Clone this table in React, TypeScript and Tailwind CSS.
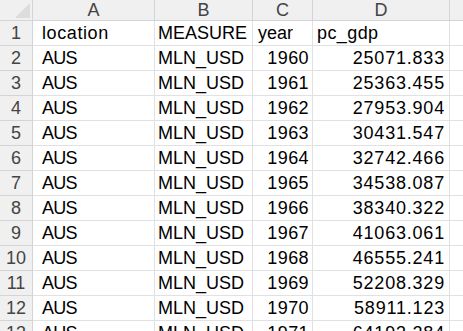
const rows: [string, string, string, string][] = [
  ["location", "MEASURE", "year", "pc_gdp"],
  ["AUS", "MLN_USD", "1960", "25071.833"],
  ["AUS", "MLN_USD", "1961", "25363.455"],
  ["AUS", "MLN_USD", "1962", "27953.904"],
  ["AUS", "MLN_USD", "1963", "30431.547"],
  ["AUS", "MLN_USD", "1964", "32742.466"],
  ["AUS", "MLN_USD", "1965", "34538.087"],
  ["AUS", "MLN_USD", "1966", "38340.322"],
  ["AUS", "MLN_USD", "1967", "41063.061"],
  ["AUS", "MLN_USD", "1968", "46555.241"],
  ["AUS", "MLN_USD", "1969", "52208.329"],
  ["AUS", "MLN_USD", "1970", "58911.123"],
  ["AUS", "MLN_USD", "1971", "64193.284"],
];

const cols = "grid grid-cols-[33px_122px_98px_60px_137px_1fr]";

export default function App() {
  return (
    <div
      className="w-[463px] h-[331px] overflow-hidden bg-white text-[18px] text-black"
      style={{ fontFamily: '"Liberation Sans", Arial, sans-serif' }}
    >
      {/* column headers */}
      <div className={`${cols} h-[21px] bg-[#f0f0f0] text-[#444] border-b border-[#d4d4d4]`}>
        <div className="relative border-r border-[#d4d4d4]">
          <div className="absolute right-[2px] bottom-[2px] w-0 h-0 border-l-[15px] border-l-transparent border-b-[15px] border-b-[#dcdcdc]" />
        </div>
        {["A", "B", "C", "D", ""].map((c, i) => (
          <div key={i} className="flex items-center justify-center border-r border-[#d4d4d4] leading-none last:border-r-0">
            {c}
          </div>
        ))}
      </div>

      {rows.map((r, i) => (
        <div key={i} className={`${cols} h-[25px]`}>
          <div className="flex items-center justify-center bg-[#f0f0f0] text-[#444] border-r border-b border-[#d4d4d4] leading-none">
            {i + 1}
          </div>
          <div
            className={`flex items-center pl-[9px] border-r border-b border-[#e1e1e1] leading-none whitespace-nowrap overflow-hidden ${
              i === 0 ? "tracking-[0.6px]" : "tracking-[-0.8px]"
            }`}
          >
            {r[0]}
          </div>
          <div className="flex items-center pl-[3px] border-r border-b border-[#e1e1e1] leading-none whitespace-nowrap overflow-hidden">
            {r[1]}
          </div>
          <div
            className={`flex items-center border-r border-b border-[#e1e1e1] leading-none whitespace-nowrap overflow-hidden ${
              i === 0 ? "pl-[5px]" : "justify-end pr-[3px] tracking-[0.4px]"
            }`}
          >
            {r[2]}
          </div>
          <div
            className={`flex items-center border-r border-b border-[#e1e1e1] leading-none whitespace-nowrap overflow-hidden ${
              i === 0 ? "pl-[4px] tracking-[0.4px]" : "justify-end pr-[4px] tracking-[0.8px]"
            }`}
          >
            {r[3]}
          </div>
          <div className="border-b border-[#e1e1e1]" />
        </div>
      ))}
    </div>
  );
}
